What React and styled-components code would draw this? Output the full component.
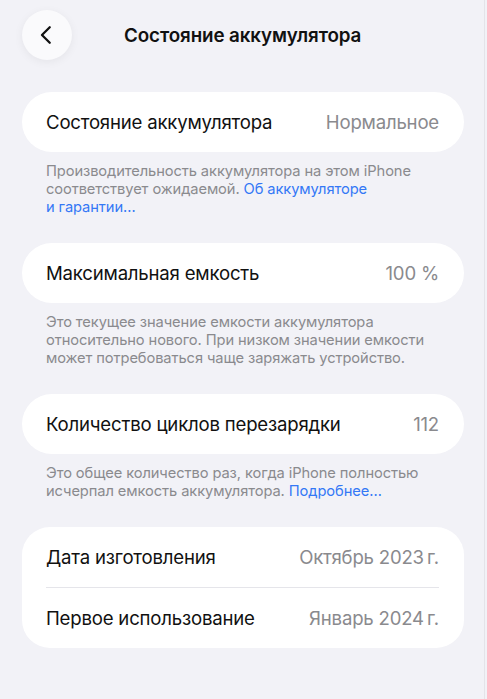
import React from "react";
import styled, { createGlobalStyle } from "styled-components";

const GlobalStyle = createGlobalStyle`
  html, body {
    margin: 0;
    padding: 0;
    background: #f2f2f7;
  }
  body {
    font-family: Inter, "Noto Sans", "Liberation Sans", sans-serif;
    -webkit-font-smoothing: antialiased;
  }
`;

const Page = styled.div`
  width: 485px;
  min-height: 699px;
  border-right: 1px solid #e4e4e9;
  background: #f2f2f7;
  padding: 10px 20px 40px 22px;
  box-sizing: border-box;
`;

const Header = styled.header`
  display: flex;
  align-items: center;
  height: 50px;
  margin-bottom: 32px;
`;

const BackButton = styled.button`
  width: 50px;
  height: 50px;
  border-radius: 50%;
  border: none;
  background: #fafafc;
  box-shadow: 0 2px 10px rgba(0, 0, 0, 0.06);
  display: flex;
  align-items: center;
  justify-content: center;
  padding: 0;
  cursor: pointer;
`;

const Title = styled.h1`
  margin: 0 0 0 52px;
  font-size: 18.8px;
  font-weight: 600;
  color: #111;
  letter-spacing: -0.1px;
`;

const Card = styled.div`
  background: #fff;
  border-radius: ${(p) => (p.$multi ? "28px" : "30px")};
  padding: 0 25px 0 24px;
`;

const Row = styled.div`
  display: flex;
  align-items: center;
  justify-content: space-between;
  height: 60px;
  & + & {
    border-top: 1px solid #e5e5ea;
  }
`;

const Label = styled.span`
  font-size: 18.6px;
  color: #111;
  letter-spacing: -0.2px;
`;

const Value = styled.span`
  font-size: 18.6px;
  color: #8a8a8e;
  letter-spacing: -0.2px;
`;

const Note = styled.p`
  margin: 10px 0 0 0;
  padding: 0 24px;
  font-size: 14.7px;
  line-height: 18px;
  color: #8a8a8e;
  letter-spacing: -0.1px;
`;

const Link = styled.a`
  color: #3478f6;
  text-decoration: none;
`;

const Section = styled.section`
  margin-bottom: 27px;
`;

function Chevron() {
  return (
    <svg width="22" height="22" viewBox="0 0 24 24" fill="none">
      <path
        d="M15 3.5 L6.5 12 L15 20.5"
        stroke="#111"
        strokeWidth="2.5"
        strokeLinecap="round"
        strokeLinejoin="round"
      />
    </svg>
  );
}

export default function App() {
  return (
    <>
      <GlobalStyle />
      <Page>
        <Header>
          <BackButton aria-label="Назад">
            <Chevron />
          </BackButton>
          <Title>Состояние аккумулятора</Title>
        </Header>

        <Section>
          <Card>
            <Row>
              <Label>Состояние аккумулятора</Label>
              <Value>Нормальное</Value>
            </Row>
          </Card>
          <Note>
            Производительность аккумулятора на этом iPhone
            <br />
            соответствует ожидаемой. <Link href="#">Об аккумуляторе
            <br />
            и гарантии…</Link>
          </Note>
        </Section>

        <Section>
          <Card>
            <Row>
              <Label>Максимальная емкость</Label>
              <Value>100 %</Value>
            </Row>
          </Card>
          <Note>
            Это текущее значение емкости аккумулятора
            <br />
            относительно нового. При низком значении емкости
            <br />
            может потребоваться чаще заряжать устройство.
          </Note>
        </Section>

        <Section>
          <Card>
            <Row>
              <Label>Количество циклов перезарядки</Label>
              <Value>112</Value>
            </Row>
          </Card>
          <Note>
            Это общее количество раз, когда iPhone полностью
            <br />
            исчерпал емкость аккумулятора. <Link href="#">Подробнее…</Link>
          </Note>
        </Section>

        <Section>
          <Card $multi>
            <Row>
              <Label>Дата изготовления</Label>
              <Value>Октябрь 2023{"\u2009"}г.</Value>
            </Row>
            <Row>
              <Label>Первое использование</Label>
              <Value>Январь 2024{"\u2009"}г.</Value>
            </Row>
          </Card>
        </Section>
      </Page>
    </>
  );
}
